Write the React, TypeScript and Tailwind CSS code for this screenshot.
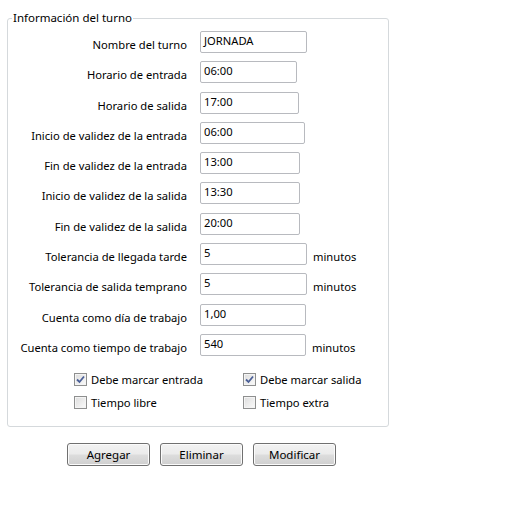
import React from 'react';

type Field = { label: string; value: string; width: string; unit?: boolean };

const fields: Field[] = [
  { label: 'Nombre del turno', value: 'JORNADA', width: 'w-[107px]' },
  { label: 'Horario de entrada', value: '06:00', width: 'w-[97px]' },
  { label: 'Horario de salida', value: '17:00', width: 'w-[99px]' },
  { label: 'Inicio de validez de la entrada', value: '06:00', width: 'w-[105px]' },
  { label: 'Fin de validez de la entrada', value: '13:00', width: 'w-[100px]' },
  { label: 'Inicio de validez de la salida', value: '13:30', width: 'w-[100px]' },
  { label: 'Fin de validez de la salida', value: '20:00', width: 'w-[100px]' },
  { label: 'Tolerancia de llegada tarde', value: '5', width: 'w-[107px]', unit: true },
  { label: 'Tolerancia de salida temprano', value: '5', width: 'w-[107px]', unit: true },
  { label: 'Cuenta como día de trabajo', value: '1,00', width: 'w-[106px]' },
  { label: 'Cuenta como tiempo de trabajo', value: '540', width: 'w-[106px]', unit: true },
];

function Check({ checked, label }: { checked?: boolean; label: string }) {
  return (
    <label className="flex items-center gap-[4px] leading-[16px]">
      <span className="flex h-[13px] w-[13px] items-center justify-center border border-[#8e8f8f] bg-[linear-gradient(135deg,#dcdcdc,#fbfbfb)] shadow-[inset_0_0_0_1px_#f4f4f4]">
        {checked && (
          <svg width="9" height="9" viewBox="0 0 9 9">
            <path d="M1 4.5 L3.5 7 L8 1.5" fill="none" stroke="#4a5f97" strokeWidth="1.8" />
          </svg>
        )}
      </span>
      <span>{label}</span>
    </label>
  );
}

function Button({ children }: { children: React.ReactNode }) {
  return (
    <button className="h-[23px] w-[83px] rounded-[3px] border border-[#707070] bg-[linear-gradient(to_bottom,#f2f2f2_0%,#ebebeb_48%,#dddddd_52%,#cfcfcf_100%)] text-[11.5px] text-black shadow-[inset_0_0_0_1px_#fbfbfb]">
      {children}
    </button>
  );
}

export default function App() {
  return (
    <div className="h-[518px] w-[507px] bg-white pt-[10px] font-['Noto_Sans',sans-serif] text-[11.2px] text-black">
      <fieldset className="ml-[7px] w-[382px] rounded-[3px] border border-[#d5d9dc] pb-[15px]">
        <legend className="ml-[4px] px-[1px] text-[11.5px] leading-[16px]">Información del turno</legend>
        <div className="mt-[5px] flex flex-col gap-y-[8.3px]">
          {fields.map((f) => (
            <div key={f.label} className="flex items-end">
              <span className="w-[179px] text-right leading-[16px]">{f.label}</span>
              <div
                className={`ml-[13px] h-[22px] ${f.width} rounded-[2px] border border-[#b8babf] px-[3px] leading-[18px]`}
              >
                {f.value}
              </div>
              {f.unit && <span className="ml-[6px] leading-[16px]">minutos</span>}
            </div>
          ))}
        </div>
        <div className="mt-[16px] grid grid-cols-[169px_auto] gap-y-[7px] pl-[66px]">
          <Check checked label="Debe marcar entrada" />
          <Check checked label="Debe marcar salida" />
          <Check label="Tiempo libre" />
          <Check label="Tiempo extra" />
        </div>
      </fieldset>
      <div className="ml-[67px] mt-[16px] flex gap-[10px]">
        <Button>Agregar</Button>
        <Button>Eliminar</Button>
        <Button>Modificar</Button>
      </div>
    </div>
  );
}
